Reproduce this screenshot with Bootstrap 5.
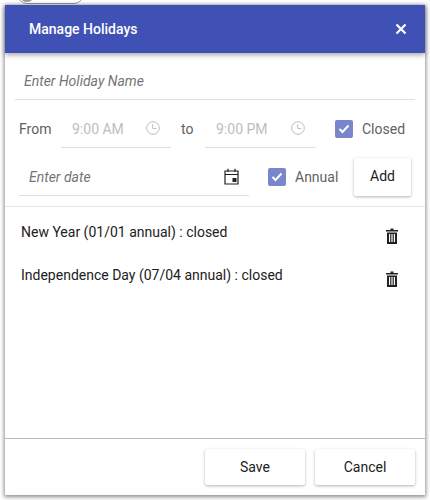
<!DOCTYPE html>
<html lang="en">
<head>
<meta charset="utf-8">
<title>Manage Holidays</title>
<link rel="stylesheet" href="https://cdn.jsdelivr.net/npm/bootstrap@5.3.0/dist/css/bootstrap.min.css">
<style>
html,body{height:500px;overflow:hidden;background:#fff}
body{font-family:Roboto,"Liberation Sans",sans-serif;font-size:14px;color:#212121;position:relative}
.peek{position:absolute;left:17px;top:-16px;width:67px;height:20px;border:1px solid #9a9a9a;border-radius:10px;background:#fff}
.peek::before{content:"";position:absolute;left:1px;top:1px;width:16px;height:16px;border-radius:50%;border:2px solid #999;background:#ddd}
.dlg{margin:5px;height:490px;background:#fff;box-shadow:0 1px 4px 1px rgba(0,0,0,.45);border-radius:0;position:relative}
.dlg-head{height:48px;background:#3f51b5;color:#fff;padding:0 18px 0 24px;font-size:14px;font-weight:500;box-shadow:0 2px 5px rgba(0,0,0,.35);position:relative}
.name-wrap{padding:0 10px;height:47px}
.under{border-bottom:1px solid #e0e0e0}
.name-in{height:47px;font-style:italic;color:#757575;padding-left:9px;padding-top:12px;font-size:14px}
.nudge{padding-top:2px}
.time-row{height:48px;padding:10px 0 0 14px}
.lab{color:#616161;font-size:14px}
.from-lab{width:32px}
.time-a{width:110px;height:38px;margin-left:10px;padding:0 11px;color:#bdbdbd;font-size:14px}
.time-b{width:111px;height:38px;margin-left:12px;padding:0 11px;color:#bdbdbd;font-size:14px}
.to-lab{margin-left:10px;width:12px;color:#616161}
.box{width:18px;height:18px;border-radius:2px;background:#7986cb;flex:none;margin-left:19px;margin-right:9px}
.date-row{height:58px;padding:10px 0 10px 14px}
.date-in{width:230px;height:38px;padding:0 10px;font-style:italic;color:#757575}
.raised{background:#fff;border-radius:2px;box-shadow:0 1px 3px rgba(0,0,0,.3);color:#212121;font-size:14px;border:0}
.add-b{width:57px;height:38px;margin-left:16px}
.annual-lab{width:43px}
.items{height:234px;border-top:1px solid #e6e6e6;border-bottom:1px solid #bdbdbd;padding:4px 27px 0 16px}
.itm{height:43px;color:#212121;font-size:14px;line-height:43px}
.bin{margin-top:17px}
.foot{height:56px;padding:10px 10px 10px 0;gap:10px}
.foot-b{width:100px;height:36px}
</style>
</head>
<body>
<div class="peek"></div>
<div class="dlg d-flex flex-column">
  <div class="dlg-head d-flex align-items-center justify-content-between">
    <span class="nudge">Manage Holidays</span>
    <svg width="12" height="12" viewBox="0 0 12 12"><path d="M1.500 1.500l9 9M10.500 1.500l-9 9" stroke="#fff" stroke-width="2.200" fill="none"/></svg>
  </div>
  <div class="name-wrap"><div class="name-in under d-flex align-items-center">Enter Holiday Name</div></div>
  <div class="time-row d-flex align-items-center">
    <span class="lab from-lab nudge">From</span>
    <div class="time-a under d-flex align-items-center justify-content-between">
      <span class="nudge">9:00 AM</span>
      <svg width="14" height="14" viewBox="0 0 14 14" fill="none" stroke="#bdbdbd"><circle cx="7" cy="7" r="6.300"/><path d="M6.700 3.300V7.500H10.300"/></svg>
    </div>
    <span class="to-lab lab nudge">to</span>
    <div class="time-b under d-flex align-items-center justify-content-between">
      <span class="nudge">9:00 PM</span>
      <svg width="14" height="14" viewBox="0 0 14 14" fill="none" stroke="#bdbdbd"><circle cx="7" cy="7" r="6.300"/><path d="M6.700 3.300V7.500H10.300"/></svg>
    </div>
    <div class="box d-flex align-items-center justify-content-center">
      <svg width="12" height="10" viewBox="0 0 12 10" fill="none" stroke="#fff" stroke-width="2"><path d="M1.500 5l3 3 6-6.500"/></svg>
    </div>
    <span class="lab nudge">Closed</span>
  </div>
  <div class="date-row d-flex align-items-center">
    <div class="date-in under d-flex align-items-center justify-content-between">
      <span class="nudge">Enter date</span>
      <svg width="15" height="17" viewBox="0 0 15 17" fill="none"><path d="M1 3h13v13H1zM1 6.500h13" stroke="#212121" stroke-width="1.200"/><path d="M4 .8v3.200M11 .8v3.200" stroke="#212121" stroke-width="1.200"/><rect x="8.500" y="10" width="4" height="4" fill="#212121"/></svg>
    </div>
    <div class="box d-flex align-items-center justify-content-center">
      <svg width="12" height="10" viewBox="0 0 12 10" fill="none" stroke="#fff" stroke-width="2"><path d="M1.500 5l3 3 6-6.500"/></svg>
    </div>
    <span class="lab annual-lab nudge">Annual</span>
    <button type="button" class="raised add-b">Add</button>
  </div>
  <div class="items flex-grow-1">
    <div class="itm d-flex justify-content-between">
      <span>New Year (01/01 annual) : closed</span>
      <svg class="bin" width="12" height="16" viewBox="0 0 12 16" fill="#212121"><path d="M4.500 .5h3V2H12v1.500H0V2h4.500z"/><path d="M1 4.500h10V16H1zM3 6v8h1.200V6zM5.400 6v8h1.200V6zM7.800 6v8H9V6z" fill-rule="evenodd"/></svg>
    </div>
    <div class="itm d-flex justify-content-between">
      <span>Independence Day (07/04 annual) : closed</span>
      <svg class="bin" width="12" height="16" viewBox="0 0 12 16" fill="#212121"><path d="M4.500 .5h3V2H12v1.500H0V2h4.500z"/><path d="M1 4.500h10V16H1zM3 6v8h1.200V6zM5.400 6v8h1.200V6zM7.800 6v8H9V6z" fill-rule="evenodd"/></svg>
    </div>
  </div>
  <div class="foot d-flex justify-content-end">
    <button type="button" class="raised foot-b">Save</button>
    <button type="button" class="raised foot-b">Cancel</button>
  </div>
</div>
<script src="https://cdn.jsdelivr.net/npm/bootstrap@5.3.0/dist/js/bootstrap.bundle.min.js"></script>
</body>
</html>
